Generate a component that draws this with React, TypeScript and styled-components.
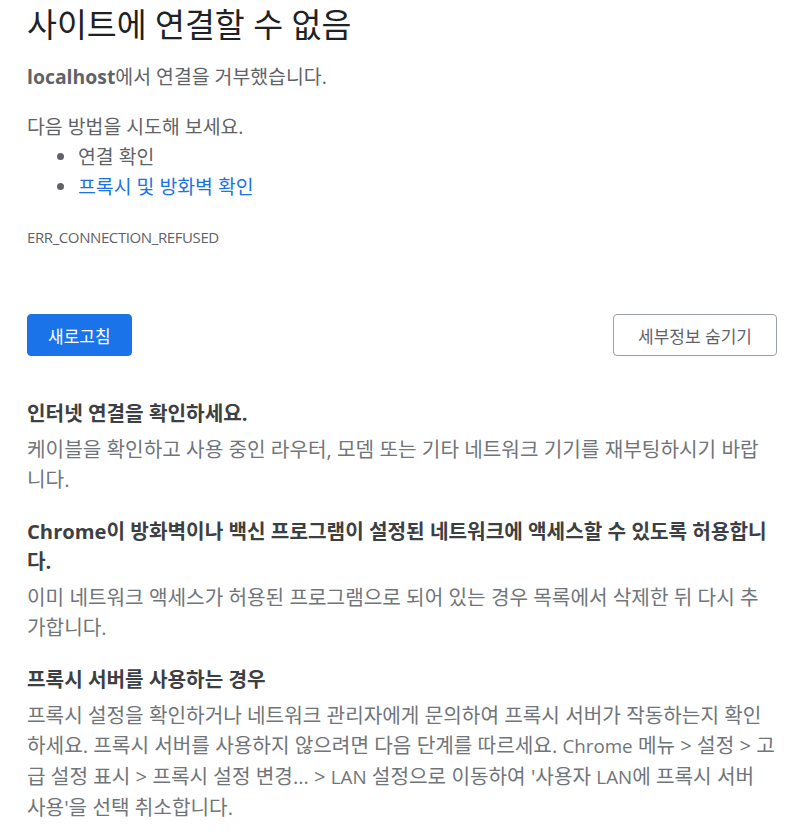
import styled, { createGlobalStyle } from 'styled-components'

const GlobalStyle = createGlobalStyle`
  body {
    margin: 0;
    background: #fff;
    font-family: "Open Sans", "Noto Sans CJK KR", sans-serif;
  }
`

const Page = styled.div`
  width: 750px;
  padding: 4px 0 0 27px;
  color: #5f6368;
  font-size: 19.4px;
  line-height: 30px;
`

const Title = styled.h1`
  margin: 0 0 17px;
  font-size: 32.5px;
  line-height: 41px;
  font-weight: 400;
  color: #202124;
`

const Para = styled.p<{ $gap?: number }>`
  margin: ${p => p.$gap ?? 0}px 0 0;
`

const Strong = styled.b`
  font-weight: 700;
`

/* Latin words sit a little smaller next to the Hangul, as in the original page */
const Term = styled.span`
  font-size: 0.93em;
`

const List = styled.ul`
  margin: 0;
  padding-left: 51px;
  li::marker {
    color: #5f6368;
  }
`

const Link = styled.a`
  color: #1a73e8;
  text-decoration: none;
`

const ErrorCode = styled.div`
  margin-top: 25px;
  font-size: 15px;
  line-height: 20px;
  letter-spacing: -0.4px;
  color: #5f6368;
`

const ButtonRow = styled.div`
  display: flex;
  justify-content: space-between;
  margin-top: 67px;
`

const Button = styled.button<{ $primary?: boolean }>`
  height: 42px;
  padding: 0 ${p => (p.$primary ? 20 : 24)}px;
  border-radius: 4px;
  font-family: inherit;
  font-size: 17px;
  cursor: pointer;
  border: 1px solid ${p => (p.$primary ? '#1a73e8' : '#9aa0a6')};
  background: ${p => (p.$primary ? '#1a73e8' : '#fff')};
  color: ${p => (p.$primary ? '#fff' : '#5f6368')};
`

const Details = styled.div`
  margin-top: 42px;
  display: flex;
  flex-direction: column;
  gap: 22px;
  font-size: 20.2px;
`

const Section = styled.section``

const SectionTitle = styled.h3`
  margin: 0 0 6px;
  font-size: inherit;
  line-height: 30px;
  font-weight: 700;
  color: #3c4043;
`

const SectionText = styled.p`
  margin: 0;
  color: #70757a;
`

export default function App() {
  return (
    <>
      <GlobalStyle />
      <Page>
        <Title>사이트에 연결할 수 없음</Title>
        <Para>
          <Strong>localhost</Strong>에서 연결을 거부했습니다.
        </Para>
        <Para $gap={20}>다음 방법을 시도해 보세요.</Para>
        <List>
          <li>연결 확인</li>
          <li>
            <Link href="#">프록시 및 방화벽 확인</Link>
          </li>
        </List>
        <ErrorCode>ERR_CONNECTION_REFUSED</ErrorCode>
        <ButtonRow>
          <Button $primary>새로고침</Button>
          <Button>세부정보 숨기기</Button>
        </ButtonRow>
        <Details>
          <Section>
            <SectionTitle>인터넷 연결을 확인하세요.</SectionTitle>
            <SectionText>
              케이블을 확인하고 사용 중인 라우터, 모뎀 또는 기타 네트워크 기기를 재부팅하시기 바랍니다.
            </SectionText>
          </Section>
          <Section>
            <SectionTitle>
              Chrome이 방화벽이나 백신 프로그램이 설정된 네트워크에 액세스할 수 있도록 허용합니다.
            </SectionTitle>
            <SectionText>
              이미 네트워크 액세스가 허용된 프로그램으로 되어 있는 경우 목록에서 삭제한 뒤 다시 추가합니다.
            </SectionText>
          </Section>
          <Section>
            <SectionTitle>프록시 서버를 사용하는 경우</SectionTitle>
            <SectionText>
              프록시 설정을 확인하거나 네트워크 관리자에게 문의하여 프록시 서버가 작동하는지 확인하세요.
              프록시 서버를 사용하지 않으려면 다음 단계를 따르세요. <Term>Chrome</Term> 메뉴 &gt; 설정 &gt;
              고급 설정 표시 &gt; 프록시 설정 변경... &gt; <Term>LAN</Term> 설정으로 이동하여 '사용자{' '}
              <Term>LAN</Term>에 프록시 서버 사용'을 선택 취소합니다.
            </SectionText>
          </Section>
        </Details>
      </Page>
    </>
  )
}
